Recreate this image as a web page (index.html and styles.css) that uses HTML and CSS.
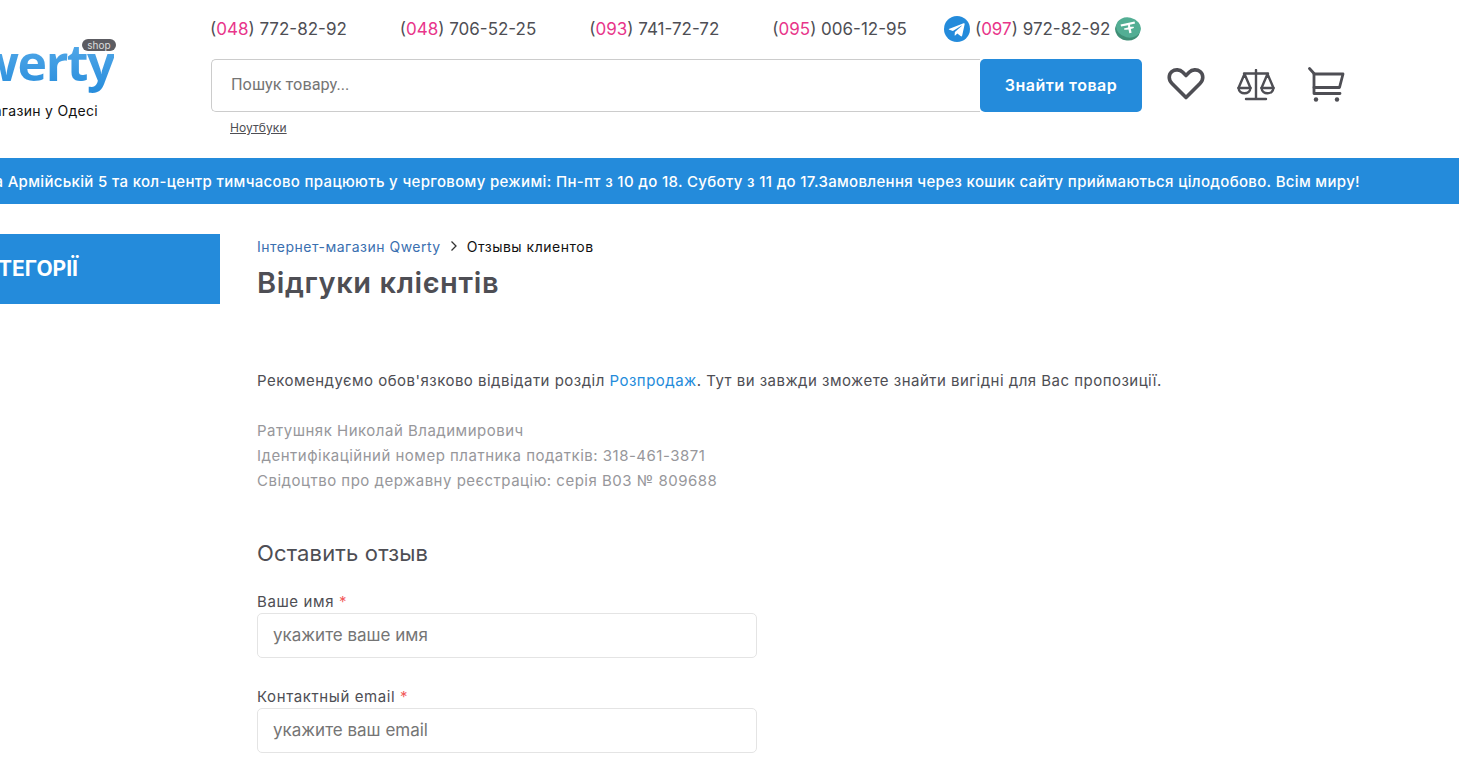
FILE: index.html
```html
<!DOCTYPE html>
<html lang="uk">
<head>
    <meta charset="UTF-8">
    <meta name="viewport" content="width=device-width, initial-scale=1.0">
    <title>Відгуки клієнтів</title>
    <link rel="stylesheet" href="styles.css">
</head>
<body>
    <header class="header">
        <div class="logo">
            <div class="logo-name">
                <span class="logo-text">Qwerty</span>
                <span class="logo-badge">shop</span>
            </div>
            <div class="logo-slogan">Інтернет-магазин у Одесі</div>
        </div>
        <div class="header-main">
            <div class="phones">
                <a class="phone">(<b>048</b>) 772-82-92</a>
                <a class="phone">(<b>048</b>) 706-52-25</a>
                <a class="phone">(<b>093</b>) 741-72-72</a>
                <a class="phone phone-last">(<b>095</b>) 006-12-95</a>
                <div class="phone-group">
                    <svg class="icon-telegram" viewBox="0 0 26 26" width="26" height="26">
                        <circle cx="13" cy="13" r="13" fill="#248bdb"/>
                        <path d="M5.500 12.800 19.600 7.300c.7-.2 1.200.2 1 1.100l-2.400 11.200c-.2.800-.7 1-1.300.6l-3.600-2.700-1.800 1.700c-.3.300-.5.400-.9.400l.3-3.700 6.700-6c.3-.3-.1-.4-.4-.2l-8.300 5.200-3.500-1.100c-.8-.2-.8-.8-.1-1z" fill="#fff"/>
                    </svg>
                    <a class="phone phone-last">(<b>097</b>) 972-82-92</a>
                    <svg class="icon-tether" viewBox="0 0 26 24" width="26" height="24">
                        <ellipse cx="12.500" cy="13" rx="12.500" ry="10.500" fill="#3f8f76" transform="rotate(12 12.500 13)"/>
                        <ellipse cx="13.500" cy="10.500" rx="12.500" ry="10" fill="#53ae94" transform="rotate(12 13.500 10.500)"/>
                        <path d="M5.500 7.500 19.500 4.500l.6 2-5.200 1.200.5 2.200c1.300-.2 2.500-.2 3.300-.1l.2 1.300c-.9.300-2 .6-3.100.8l.8 3.800-2.300.5-.8-3.800c-1.600.3-3.100.4-4.200.4l-.3-1.300c1.100-.4 2.500-.8 4.100-1.100L13.100 8.200 6.100 9.500z" fill="#fff"/>
                    </svg>
                </div>
            </div>
            <div class="search-row">
                <div class="search-col">
                    <form class="search">
                        <input class="search-input" type="text" placeholder="Пошук товару...">
                        <button class="search-button" type="button">Знайти товар</button>
                    </form>
                    <a class="search-hint">Ноутбуки</a>
                </div>
                <div class="header-icons">
                    <svg viewBox="0 0 38 34" width="38" height="34" class="icon-heart">
                        <path d="M19 30.500 5 16.500C1.200 12.700 1.500 7.500 4.800 4.700 8 2 12.800 2.300 15.800 5.300L19 8.500l3.200-3.200c3-3 7.800-3.300 11-.6 3.300 2.800 3.600 8-.2 11.800z" fill="none" stroke="#4e4e54" stroke-width="3.600" stroke-linejoin="round"/>
                    </svg>
                    <svg viewBox="0 0 38 32" width="38" height="32" class="icon-scale">
                        <g fill="none" stroke="#4e4e54" stroke-width="2.400" stroke-linecap="round" stroke-linejoin="round">
                            <path d="M19 1v28M9 30h20M7 4.500h24"/>
                            <path d="M7.500 5 1.500 19h12zM30.500 5l-6 14h12z"/>
                            <path d="M1.500 19c.5 7 11.500 7 12 0M24.500 19c.5 7 11.500 7 12 0"/>
                        </g>
                    </svg>
                    <svg viewBox="0 0 37 35" width="37" height="35" class="icon-cart">
                        <g fill="none" stroke="#4e4e54" stroke-width="2.800" stroke-linecap="round" stroke-linejoin="round">
                            <path d="M1.500 1.500 6 6.500v20h26"/>
                            <path d="M6 7h29l-3.500 13.500H6"/>
                        </g>
                        <circle cx="8" cy="32.500" r="2.200" fill="#4e4e54"/>
                        <circle cx="29" cy="32.500" r="2.200" fill="#4e4e54"/>
                    </svg>
                </div>
            </div>
        </div>
    </header>

    <div class="notice">
        <span class="notice-text">Магазин на Армійській 5 та кол-центр тимчасово працюють у черговому режимі: Пн-пт з 10 до 18. Суботу з 11 до 17.Замовлення через кошик сайту приймаються цілодобово. Всім миру!</span>
    </div>

    <div class="page">
        <aside class="sidebar">
            <div class="sidebar-title">КАТЕГОРІЇ</div>
        </aside>
        <main class="content">
            <div class="breadcrumbs">
                <a class="crumb-link">Інтернет-магазин Qwerty</a>
                <svg class="crumb-arrow" viewBox="0 0 8 12" width="8" height="12">
                    <path d="M1.500 1.500 6 6l-4.500 4.500" fill="none" stroke="#333" stroke-width="1.300"/>
                </svg>
                <span class="crumb-current">Отзывы клиентов</span>
            </div>
            <h1 class="title">Відгуки клієнтів</h1>
            <p class="recommend">Рекомендуємо обов'язково відвідати розділ <a class="link">Розпродаж</a>. Тут ви завжди зможете знайти вигідні для Вас пропозиції.</p>
            <p class="legal">Ратушняк Николай Владимирович<br>Ідентифікаційний номер платника податків: 318-461-3871<br>Свідоцтво про державну реєстрацію: серія В03 № 809688</p>
            <h2 class="form-title">Оставить отзыв</h2>
            <form class="review-form">
                <label class="field">
                    <span class="field-label">Ваше имя <i>*</i></span>
                    <input class="field-input" type="text" placeholder="укажите ваше имя">
                </label>
                <label class="field">
                    <span class="field-label">Контактный email <i>*</i></span>
                    <input class="field-input" type="text" placeholder="укажите ваш email">
                </label>
            </form>
        </main>
    </div>
</body>
</html>
```

FILE: styles.css
```css
html, body {
    margin: 0;
    padding: 0;
    overflow: hidden;
    height: 100%;
}
body {
    font-family: Inter, "Noto Sans", sans-serif;
    color: #4e4e54;
    background-color: #fff;
    font-size: 14px;
}
a {
    text-decoration: none;
}
.header {
    display: flex;
    height: 158px;
}
.logo {
    width: 211px;
    flex-shrink: 0;
    display: flex;
    flex-direction: column;
    align-items: flex-end;
    overflow: hidden;
    box-sizing: border-box;
    padding-right: 97px;
}
.logo-name {
    position: relative;
    margin-top: 28px;
    height: 72px;
    white-space: nowrap;
}
.logo-text {
    font-family: "Open Sans", sans-serif;
    font-size: 50px;
    font-weight: 700;
    line-height: 68px;
    letter-spacing: -1.500px;
    background: linear-gradient(#5fb0ec, #248bdb);
    -webkit-background-clip: text;
    background-clip: text;
    color: transparent;
}
.logo-badge {
    position: absolute;
    right: -2px;
    top: 11px;
    width: 34px;
    height: 12px;
    background-color: #5c5c62;
    color: #ddd;
    border-radius: 6px;
    font-size: 10px;
    line-height: 12px;
    text-align: center;
}
.logo-slogan {
    font-size: 14px;
    letter-spacing: .3px;
    color: #111;
    white-space: nowrap;
    margin: 2px 16px 0 0;
}
.header-main {
    flex: 1;
}
.phones {
    display: flex;
    align-items: center;
    gap: 37px;
    height: 25px;
    margin: 16px 0 0 -1px;
}
.phone {
    font-size: 17px;
    color: #4e4e54;
    white-space: nowrap;
    padding-right: 16px;
}
.phone-last {
    padding-right: 0;
}
.phone b {
    font-weight: 400;
    color: #e8358a;
}
.phone-group {
    display: flex;
    align-items: center;
    gap: 5px;
}
.search-row {
    display: flex;
    margin-top: 18px;
}
.search-col {
    width: 931px;
}
.search {
    display: flex;
    height: 53px;
}
.search-input {
    flex: 1;
    min-width: 0;
    box-sizing: border-box;
    border: 1px solid #ccc;
    border-right: none;
    border-radius: 5px 0 0 5px;
    padding: 0 19px 3px;
    font-family: Roboto, sans-serif;
    font-size: 16.300px;
    outline: none;
}
.search-input::placeholder {
    color: #757575;
}
.search-button {
    width: 162px;
    background-color: #248bdb;
    color: #fff;
    border: none;
    border-radius: 5px;
    padding-bottom: 2px;
    font-family: Inter, sans-serif;
    font-size: 16px;
    font-weight: 600;
    letter-spacing: .5px;
    cursor: pointer;
}
.search-hint {
    display: block;
    margin: 8px 0 0 19px;
    font-size: 12px;
    letter-spacing: .1px;
    color: #4e4e54;
    text-decoration: underline;
}
.header-icons {
    display: flex;
    align-items: flex-start;
    margin-left: 25px;
    padding-top: 8px;
}
.icon-scale {
    margin-left: 32px;
    margin-top: 2px;
}
.icon-cart {
    margin-left: 33px;
}
.notice {
    height: 46px;
    background-color: #248bdb;
    display: flex;
    justify-content: flex-end;
    align-items: center;
    overflow: hidden;
    padding-right: 99px;
}
.notice-text {
    color: #fff;
    font-size: 15px;
    font-weight: 500;
    letter-spacing: .33px;
    white-space: nowrap;
    flex-shrink: 0;
}
.page {
    display: flex;
    margin-top: 30px;
}
.sidebar {
    width: 220px;
    flex-shrink: 0;
}
.sidebar-title {
    height: 70px;
    box-sizing: border-box;
    padding: 0 142px 2px 0;
    background-color: #248bdb;
    color: #fff;
    font-size: 21px;
    font-weight: 700;
    display: flex;
    align-items: center;
    justify-content: flex-end;
    overflow: hidden;
    white-space: nowrap;
}
.content {
    margin-left: 37px;
    flex: 1;
}
.breadcrumbs {
    display: flex;
    align-items: center;
    height: 24px;
    font-size: 14px;
    letter-spacing: .5px;
}
.crumb-link {
    color: #3a6fb0;
}
.crumb-arrow {
    margin: 0 9px;
}
.crumb-current {
    color: #111;
}
.title {
    margin: 7px 0 0;
    font-size: 29px;
    line-height: 36px;
    font-weight: 600;
    letter-spacing: .6px;
}
.recommend {
    margin: 67px 0 0;
    font-size: 15px;
    line-height: 25px;
    letter-spacing: .48px;
}
.link {
    color: #248bdb;
}
.legal {
    margin: 25px 0 0;
    font-size: 15px;
    line-height: 25px;
    letter-spacing: .5px;
    color: #97979b;
}
.form-title {
    margin: 46px 0 0;
    font-size: 22px;
    line-height: 28px;
    font-weight: 400;
    letter-spacing: .15px;
}
.review-form {
    margin-top: 22px;
}
.field {
    display: block;
    width: 500px;
    margin-bottom: 26px;
}
.field-label {
    display: block;
    padding-top: 2px;
    font-size: 15px;
    line-height: 22px;
    letter-spacing: .6px;
}
.field-label i {
    font-style: normal;
    color: #f25b5b;
}
.field-input {
    display: block;
    width: 100%;
    height: 45px;
    box-sizing: border-box;
    border: 1px solid #e4e4e4;
    border-radius: 5px;
    padding: 0 15px 1px;
    font-family: Inter, sans-serif;
    font-size: 17px;
    outline: none;
}
.field-input::placeholder {
    color: #757575;
}
```
